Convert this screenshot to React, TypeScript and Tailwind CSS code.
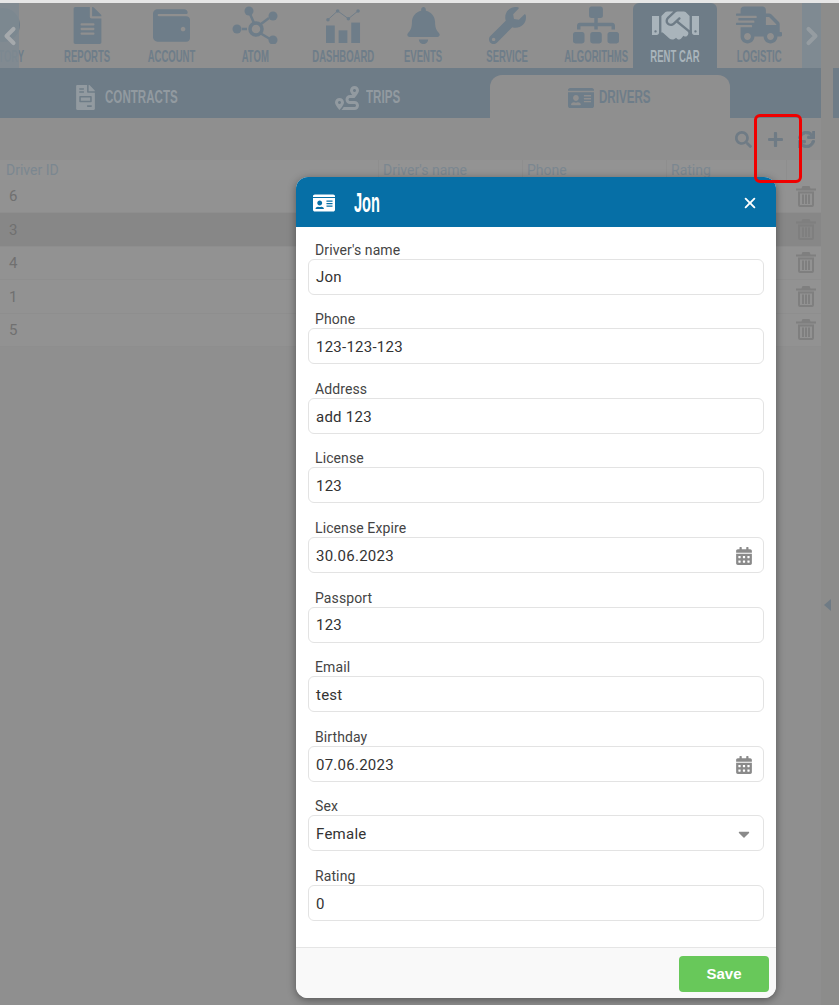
import type { ReactNode } from "react";
import {
  FaBell,
  FaCalendarAlt,
  FaCaretDown,
  FaFileAlt,
  FaFileInvoice,
  FaHandshake,
  FaIdCard,
  FaPlus,
  FaRoute,
  FaSearch,
  FaShippingFast,
  FaSitemap,
  FaSync,
  FaWallet,
  FaWrench,
} from "react-icons/fa";
import { FiChevronLeft, FiChevronRight } from "react-icons/fi";
import { IoClose } from "react-icons/io5";

const ROBOTO = "font-['Roboto',sans-serif]";
const SANS = "font-['Liberation_Sans',sans-serif]";

function AtomIcon() {
  return (
    <svg viewBox="0 0 46 38" className="h-[38px] w-[46px]" fill="currentColor" stroke="currentColor">
      <circle cx="17" cy="5" r="4.5" stroke="none" />
      <circle cx="41" cy="10" r="4.5" stroke="none" />
      <circle cx="5" cy="23" r="4.5" stroke="none" />
      <circle cx="41" cy="34" r="4.5" stroke="none" />
      <circle cx="24" cy="23" r="6" fill="none" strokeWidth="3.5" />
      <path d="M18 8l4 9M28 27l10 6M29 18l8-6M10 23h5" fill="none" strokeWidth="2.5" />
    </svg>
  );
}

function DashboardIcon() {
  return (
    <svg viewBox="0 0 36 36" className="h-[35px] w-[35px]" fill="currentColor" stroke="currentColor">
      <path d="M2 12L12 3l11 8 10-8" fill="none" strokeWidth="1" />
      <circle cx="2" cy="12" r="1.8" stroke="none" />
      <circle cx="12" cy="3" r="1.8" stroke="none" />
      <circle cx="23" cy="11" r="1.8" stroke="none" />
      <circle cx="33" cy="3" r="1.8" stroke="none" />
      <rect x="0" y="18" width="9" height="18" stroke="none" />
      <rect x="13" y="23" width="9" height="13" stroke="none" />
      <rect x="26" y="15" width="9" height="21" stroke="none" />
    </svg>
  );
}

function TrashIcon() {
  return (
    <svg viewBox="0 0 20 21" className="h-[21px] w-[20px] text-[#7f7f7f]" fill="currentColor">
      <path d="M6.5 0h7l1 2.5H20v2H0v-2h5.5z" />
      <path
        fillRule="evenodd"
        d="M2 5.5h16V19a2 2 0 0 1-2 2H4a2 2 0 0 1-2-2zM4 7.5V19h12V7.5z"
      />
      <rect x="6" y="8.5" width="2" height="9.5" />
      <rect x="9" y="8.5" width="2" height="9.5" />
      <rect x="12" y="8.5" width="2" height="9.5" />
    </svg>
  );
}

const NAV_ITEMS: { label: string; icon: ReactNode; active?: boolean; shift?: string }[] = [
  { label: "HISTORY", icon: <span className="block h-[34px] w-[34px] rounded-full bg-[#6e7d89]" /> },
  { label: "REPORTS", icon: <FaFileAlt size={37} /> },
  { label: "ACCOUNT", icon: <FaWallet size={37} /> },
  { label: "ATOM", icon: <AtomIcon /> },
  { label: "DASHBOARD", icon: <DashboardIcon />, shift: "translate-x-[4px]" },
  { label: "EVENTS", icon: <FaBell size={37} /> },
  { label: "SERVICE", icon: <FaWrench size={37} /> },
  { label: "ALGORITHMS", icon: <FaSitemap size={46} />, shift: "translate-x-[5px]" },
  { label: "RENT CAR", icon: <FaHandshake size={47} />, active: true },
  { label: "LOGISTIC", icon: <FaShippingFast size={46} /> },
];

const TABS = [
  { label: "CONTRACTS", icon: <FaFileInvoice size={25} />, box: "w-[75px] ml-[7px]" },
  { label: "TRIPS", icon: <FaRoute size={24} />, box: "w-[36px] ml-[7px]" },
  { label: "DRIVERS", icon: <FaIdCard size={26} />, box: "w-[53px] ml-[5px]", active: true },
];

const DRIVER_IDS = ["6", "3", "4", "1", "5"];

const FIELDS = [
  { label: "Driver's name", value: "Jon" },
  { label: "Phone", value: "123-123-123" },
  { label: "Address", value: "add 123" },
  { label: "License", value: "123" },
  { label: "License Expire", value: "30.06.2023", kind: "date" },
  { label: "Passport", value: "123" },
  { label: "Email", value: "test" },
  { label: "Birthday", value: "07.06.2023", kind: "date" },
  { label: "Sex", value: "Female", kind: "select" },
  { label: "Rating", value: "0" },
];

function NavBar() {
  return (
    <div className="relative flex h-[65px] overflow-hidden bg-[#8f8f8f]">
      <div className="ml-[-39px] flex">
        {NAV_ITEMS.map((item) => (
          <div
            key={item.label}
            className={`flex w-[84px] shrink-0 flex-col items-center rounded-t-md ${
              item.active ? "bg-[#6e7c87] text-[#a9b4bb]" : "text-[#6e7d89]"
            }`}
          >
            <div className={`flex h-[44px] items-center justify-center ${item.shift ?? ""}`}>{item.icon}</div>
            <div className={`mt-[1px] flex w-full justify-center ${item.shift ?? ""}`}>
              <span className={`scale-x-[.56] whitespace-nowrap text-[17px] leading-[18px] font-bold ${SANS}`}>
                {item.label}
              </span>
            </div>
          </div>
        ))}
      </div>
      <div className="absolute top-0 left-0 flex h-full w-[19px] items-center justify-center bg-[#7f8a92]/85 text-[#a5a9ac]">
        <FiChevronLeft size={28} strokeWidth={3.5} className="shrink-0" />
      </div>
      <div className="absolute top-0 right-0 flex h-full w-[19px] items-center justify-center bg-[#7f8a92] text-[#959ca1]">
        <FiChevronRight size={28} strokeWidth={3.5} className="shrink-0" />
      </div>
    </div>
  );
}

function Tabs() {
  return (
    <div className="flex h-[50px] items-end gap-[2px] bg-[#6e7c87] pl-[6px]">
      {TABS.map((tab) => (
        <div
          key={tab.label}
          className={`flex h-[43px] w-[240px] items-center justify-center rounded-t-[12px] pt-[2px] ${
            tab.active ? "bg-[#8f8f8f] text-[#6e7d89]" : "text-[#929aa0]"
          }`}
        >
          {tab.icon}
          <div className={tab.box}>
            <span className={`block origin-left scale-x-[.61] whitespace-nowrap text-[19px] font-bold ${SANS}`}>
              {tab.label}
            </span>
          </div>
        </div>
      ))}
    </div>
  );
}

function DriversTable() {
  return (
    <div className={ROBOTO}>
      <div className="flex h-[42px] items-center justify-end text-[#6f7b85]">
        <FaSearch size={17} className="mr-[15px]" />
        <FaPlus size={17} className="mr-[14px]" />
        <FaSync size={17} stroke="currentColor" strokeWidth={30} className="mr-[6px]" />
      </div>
      <div className="flex h-[20px] items-center bg-[#939393] text-[14px] text-[#7b8790]">
        <div className="w-[378px] pl-[6px]">Driver ID</div>
        <div className="w-[144px] border-l border-[#8e8e8e] pl-[4px]">Driver's name</div>
        <div className="w-[144px] border-l border-[#8e8e8e] pl-[4px]">Phone</div>
        <div className="w-[120px] border-l border-[#8e8e8e] pl-[4px]">Rating</div>
        <div className="h-full flex-1 border-l border-[#8e8e8e]" />
      </div>
      {DRIVER_IDS.map((id, i) => (
        <div
          key={id}
          className={`flex h-[33.4px] items-center justify-between border-b border-[#8e8e8e] pr-[5px] pl-[9px] text-[15px] text-[#707070] ${
            i === 1 ? "bg-[#878787]" : "bg-[#929292]"
          }`}
        >
          <span className="pt-[1px]">{id}</span>
          <TrashIcon />
        </div>
      ))}
    </div>
  );
}

function Field({ label, value, kind }: { label: string; value: string; kind?: string }) {
  return (
    <div>
      <label className="block pt-[2px] pl-[7px] text-[14px] leading-[18px] tracking-[0.1px] text-[#444]">{label}</label>
      <div className="flex h-[36px] items-center justify-between rounded-md border border-[#e3e3e3] pt-[2px] pr-[10px] pl-[7px] text-[15px] tracking-[0.25px] text-[#333]">
        {value}
        {kind === "date" && <FaCalendarAlt size={18} className="text-[#8a8a8a]" />}
        {kind === "select" && <FaCaretDown size={18} className="text-[#8a8a8a]" />}
      </div>
    </div>
  );
}

function DriverModal() {
  return (
    <div className={`absolute top-[177px] left-[296px] flex w-[480px] flex-col overflow-hidden rounded-[12px] bg-white shadow-[0_2px_8px_rgba(0,0,0,0.4)] ${ROBOTO}`}>
      <div className="flex h-[50px] items-center bg-[#066fa6] pt-[2px] pr-[16px] pl-[17px] text-white">
        <FaIdCard size={22} />
        <div className="ml-[19px] flex-1">
          <span className={`block origin-left scale-x-[.54] text-[27px] font-bold ${SANS}`}>Jon</span>
        </div>
        <IoClose size={20} />
      </div>
      <div className="flex flex-col gap-[13.6px] border-b border-[#e5e5e5] px-[12px] pt-[11.6px] pb-[26px]">
        {FIELDS.map((f) => (
          <Field key={f.label} label={f.label} value={f.value} kind={f.kind} />
        ))}
      </div>
      <div className="flex h-[50px] items-center justify-end bg-[#f9f9f9] pt-[2px] pr-[7px]">
        <button className={`h-[36px] w-[90px] rounded-[4px] bg-[#68c85a] text-[15px] font-bold text-white ${SANS}`}>
          Save
        </button>
      </div>
    </div>
  );
}

export default function App() {
  return (
    <div className="relative h-[1005px] w-[839px] overflow-hidden bg-[#8f8f8f]">
      <div className="h-[3px] bg-[#e6e6e6]" />
      <div className="flex h-[1002px]">
        <div className="w-[821px] shrink-0">
          <NavBar />
          <Tabs />
          <DriversTable />
        </div>
        <div className="flex-1 bg-[#8c8c8b]">
          <div className="mt-[65px] ml-[12px] h-[50px] bg-[#6e7c87]" />
          <div className="mt-[481px] ml-[3px] h-0 w-0 border-y-[6px] border-r-[7px] border-y-transparent border-r-[#6f7b85]" />
        </div>
      </div>
      <DriverModal />
      {/* red annotation over the add button */}
      <div className="absolute top-[114px] left-[754px] h-[69px] w-[48px] rounded-[6px] border-[3px] border-[#f00000]" />
    </div>
  );
}
